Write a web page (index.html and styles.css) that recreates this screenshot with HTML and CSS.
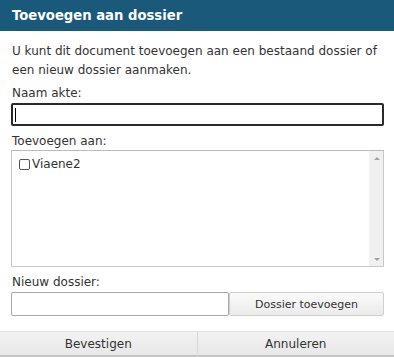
FILE: index.html
```html
<!DOCTYPE html>
<html>
<head>
<meta charset="utf-8">
<link rel="stylesheet" href="styles.css">
</head>
<body>
<div class="dialog">
  <div class="titlebar">Toevoegen aan dossier</div>
  <div class="content">
    <p class="intro">U kunt dit document toevoegen aan een bestaand dossier of een nieuw dossier aanmaken.</p>
    <label class="lbl first">Naam akte:</label>
    <div class="input focus"><span class="caret"></span></div>
    <label class="lbl">Toevoegen aan:</label>
    <div class="listbox">
      <div class="items">
        <div class="item"><span class="cb"></span>Viaene2</div>
      </div>
      <div class="scroll">
        <span class="arr up"></span>
        <span class="arr down"></span>
      </div>
    </div>
    <label class="lbl">Nieuw dossier:</label>
    <div class="newrow">
      <div class="input plain"></div>
      <div class="btn">Dossier toevoegen</div>
    </div>
  </div>
  <div class="footer">
    <div class="fbtn">Bevestigen</div>
    <div class="fbtn">Annuleren</div>
  </div>
</div>
</body>
</html>
```
FILE: styles.css
```css
html, body { margin: 0; padding: 0; background: #fff; }
body { font-family: "DejaVu Sans", Verdana, sans-serif; color: #333; font-size: 12px; }
.dialog { width: 394px; height: 357px; display: flex; flex-direction: column; }
.titlebar { height: 31px; background: #1b597b; color: #fff; font-weight: bold; font-size: 13.2px; line-height: 31px; padding-left: 12px; box-sizing: border-box; }
.content { padding: 0 10px 0 11px; flex: 1; display: flex; flex-direction: column; }
.intro { margin: 11px 0 0 1px; line-height: 19px; }
.lbl { display: block; margin: 6px 0 0 1px; line-height: 18px; }
.lbl.first { margin-top: 4px; }
.input { height: 23px; box-sizing: border-box; background: #fff; }
.input.focus { border: 2px solid #2a2a2a; border-radius: 2px; margin-top: 1px; display: flex; align-items: center; padding-left: 2px; }
.caret { width: 1px; height: 14px; background: #000; }
.listbox { margin-top: 0; height: 117px; border: 1px solid #c8c8c8; border-top-color: #bbb; display: flex; box-sizing: border-box; }
.items { flex: 1; padding: 6px 0 0 7px; }
.item { display: flex; align-items: center; font-size: 12px; }
.cb { width: 9px; height: 9px; border: 1px solid #555; border-radius: 2px; margin-right: 2px; background: #fff; }
.scroll { width: 13px; background: #f0f0f0; border-left: 1px solid #f4f4f4; display: flex; flex-direction: column; justify-content: space-between; align-items: center; padding: 6px 0 5px; }
.arr { width: 0; height: 0; border-left: 3px solid transparent; border-right: 3px solid transparent; }
.arr.up { border-bottom: 3px solid #a0a0a0; }
.arr.down { border-top: 3px solid #a0a0a0; }
.newrow { display: flex; margin-top: 1px; }
.input.plain { width: 218px; height: 24px; border: 1px solid #a9a9a9; border-radius: 2px; }
.btn { flex: 1; height: 24px; box-sizing: border-box; border: 1px solid #cfcfcf; border-radius: 2px; background: linear-gradient(#fafafa, #ebebeb); font-size: 11px; display: flex; align-items: center; justify-content: center; color: #333; }
.footer { height: 25px; display: flex; border-top: 1px solid #e2e2e2; background: #ececec; }
.fbtn { flex: 1; display: flex; align-items: center; justify-content: center; font-size: 12px; border-bottom: 2px solid #c4c4c4; background: linear-gradient(#f2f2f2, #e8e8e8); }
.fbtn + .fbtn { border-left: 1px solid #d8d8d8; }
```
